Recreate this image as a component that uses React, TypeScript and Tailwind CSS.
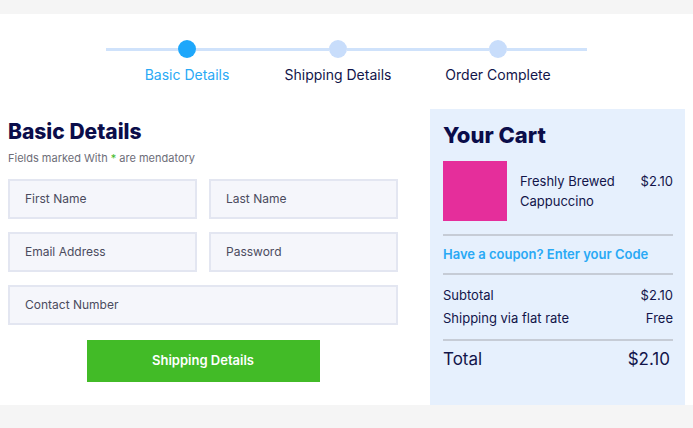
import React from "react";

const steps = [
  { label: "Basic Details", active: true },
  { label: "Shipping Details", active: false },
  { label: "Order Complete", active: false },
];

function Field({ label, className = "" }: { label: string; className?: string }) {
  return (
    <div
      className={`flex h-[40px] items-center border-2 border-[#e3e6f1] bg-[#f5f6fb] pl-[15px] text-[12px] text-[#4b4b5e] ${className}`}
    >
      {label}
    </div>
  );
}

function Stepper() {
  return (
    <div className="flex h-[95px] items-start pt-[26px] pl-[106px]">
      <div className="mt-[8px] h-[3px] w-[72px] bg-[#cfe2fb]" />
      {steps.map((step, i) => (
        <React.Fragment key={step.label}>
          <div className="flex w-[18px] flex-col items-center">
            <div
              className={`h-[18px] w-[18px] rounded-full ${step.active ? "bg-[#1ea7fb]" : "bg-[#c8ddfb]"}`}
            />
            <span
              className={`mt-[8px] whitespace-nowrap text-[14px] leading-[17px] ${
                step.active ? "text-[#29a9f5]" : "text-[#12154a]"
              }`}
            >
              {step.label}
            </span>
          </div>
          {i === 0 && <div className="mt-[8px] h-[3px] w-[133px] bg-[#cfe2fb]" />}
          {i === 1 && <div className="mt-[8px] h-[3px] w-[142px] bg-[#cfe2fb]" />}
          {i === 2 && <div className="mt-[8px] h-[3px] w-[80px] bg-[#cfe2fb]" />}
        </React.Fragment>
      ))}
    </div>
  );
}

function Row({ left, right, big }: { left: string; right: string; big?: boolean }) {
  return (
    <div className={`flex items-center justify-between ${big ? "text-[17px] leading-[22px]" : "text-[13px] leading-[23px]"}`}>
      <span>{left}</span>
      <span className={big ? "pr-[3px]" : ""}>{right}</span>
    </div>
  );
}

export default function App() {
  return (
    <div
      className="h-[428px] w-[693px] bg-[#f5f5f5] pt-[14px] text-[#12154a]"
      style={{ fontFamily: "Inter, 'Noto Sans', Arial, sans-serif" }}
    >
      <div className="flex h-[391px] flex-col bg-white">
        <Stepper />
        <div className="flex flex-1">
          <div className="w-[430px] px-[8px] pt-[10px]">
            <h2 className="text-[21px] leading-[26px] font-extrabold text-[#0b0d4a]">Basic Details</h2>
            <p className="mt-[6px] text-[11px] leading-[14px] text-[#6d6d78]">
              Fields marked With <span className="text-[#42bb27]">*</span> are mendatory
            </p>
            <div className="mt-[14px] grid w-[390px] grid-cols-2 gap-x-[12px] gap-y-[13px]">
              <Field label="First Name" />
              <Field label="Last Name" />
              <Field label="Email Address" />
              <Field label="Password" />
              <Field label="Contact Number" className="col-span-2" />
            </div>
            <div className="mt-[15px] flex w-[390px] justify-center">
              <button className="h-[42px] w-[233px] bg-[#42bb27] text-[13px] font-semibold text-white">
                Shipping Details
              </button>
            </div>
          </div>
          <div className="w-[255px] bg-[#e6f0fd] pl-[13px] pr-[12px] pt-[12px]">
            <h2 className="text-[22px] leading-[28px] font-extrabold text-[#0b0d4a]">Your Cart</h2>
            <div className="mt-[12px] flex items-start">
              <div className="h-[60px] w-[64px] bg-[#e52e9b]" />
              <div className="ml-[13px] pt-[10px] text-[13px] leading-[20px]">
                Freshly Brewed
                <br />
                Cappuccino
              </div>
              <div className="ml-auto pt-[10px] text-[13px] leading-[20px]">$2.10</div>
            </div>
            <div className="mt-[13px] h-[2px] bg-[#c6ccd6]" />
            <div className="py-[9px] text-[13px] leading-[19px] font-semibold text-[#29a9f5]">
              Have a coupon? Enter your Code
            </div>
            <div className="h-[2px] bg-[#c6ccd6]" />
            <div className="pt-[9px] pb-[9px]">
              <Row left="Subtotal" right="$2.10" />
              <Row left="Shipping via flat rate" right="Free" />
            </div>
            <div className="h-[2px] bg-[#c6ccd6]" />
            <div className="pt-[7px]">
              <Row left="Total" right="$2.10" big />
            </div>
          </div>
        </div>
      </div>
    </div>
  );
}
